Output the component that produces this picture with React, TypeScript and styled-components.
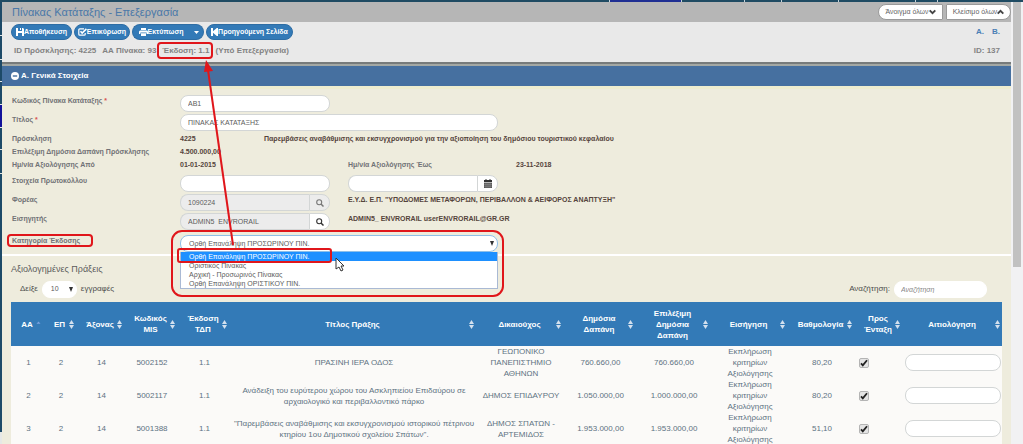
import React from 'react';
import styled, { createGlobalStyle, css } from 'styled-components';

const GlobalStyle = createGlobalStyle`
  * { box-sizing: border-box; }
  body {
    margin: 0;
    background: #eeecdd;
    color: #5f6a74;
    font-family: "Liberation Sans", Arial, sans-serif;
    font-size: 8px;
    line-height: 12px;
  }
  button, input, select { font-family: inherit; font-size: 7px; line-height: 12px; margin: 0; }
  svg { display: block; flex: none; }
`;

const red = '#e0161b';

const Frame = styled.div`
  position: relative;
  display: flex;
  flex-direction: column;
  height: 100vh;
  overflow: hidden;
`;

const MenuStrip = styled.nav`
  display: flex;
  flex: none;
  height: 2px;
  gap: 1px;
  background: #c5d3da;
`;

const MenuSlot = styled.span<{ $width?: number; $active?: boolean }>`
  ${(p) => (p.$width ? `flex: 0 0 ${p.$width}px;` : 'flex: 1;')}
  background: ${(p) => (p.$active ? '#1f2f93' : '#1f4b63')};
`;

const Body = styled.div`
  display: flex;
  flex: 1;
  min-height: 0;
`;

const Rail = styled.div`
  display: flex;
  flex-direction: column;
  flex: none;
  width: 2px;
  gap: 1px;
  padding-bottom: 12px;
  background: #e6e8e6;
`;

const RailSlot = styled.span<{ $height?: number; $active?: boolean }>`
  ${(p) => (p.$height ? `flex: 0 0 ${p.$height}px;` : 'flex: 1;')}
  background: ${(p) => (p.$active ? '#12129a' : '#1d4a68')};
`;

const Page = styled.main`
  flex: 1;
  min-width: 0;
`;

const ScrollTrack = styled.div`
  flex: none;
  width: 12px;
  padding: 0 2px;
  background: #f1f1f3;
`;

const ScrollThumb = styled.div`
  height: 60%;
  background: #c1c1c1;
`;

const TitleBar = styled.header`
  display: flex;
  align-items: center;
  justify-content: space-between;
  height: 20px;
  padding-left: 10px;
  background: #b6b6b6;
`;

const PageTitle = styled.h1`
  margin: 0;
  font-size: 11px;
  line-height: 16px;
  font-weight: normal;
  color: #4a78a8;
`;

const ButtonPair = styled.div`
  display: flex;
  gap: 3px;
`;

const FoldButton = styled.button<{ $side: 'left' | 'right' }>`
  display: flex;
  align-items: center;
  justify-content: center;
  width: 65px;
  height: 16px;
  padding: 0;
  border: 1px solid #9a9a9a;
  border-radius: ${(p) => (p.$side === 'left' ? '8px 1px 1px 8px' : '1px 8px 8px 1px')};
  background: #fff;
  color: #5f5f5f;
`;

const Toolbar = styled.section`
  display: flex;
  justify-content: space-between;
  height: 40px;
  padding: 2px 11px 0 9px;
  background: #e9e9e9;
`;

const Stack = styled.div<{ $end?: boolean }>`
  display: flex;
  flex-direction: column;
  gap: 5px;
  ${(p) => p.$end && 'align-items: flex-end;'}
`;

const ButtonRow = styled.div`
  display: flex;
  align-items: center;
  height: 16px;
  gap: 2px;
`;

const ActionButton = styled.button<{ $width: number; $part?: 'start' | 'end' }>`
  display: flex;
  align-items: center;
  justify-content: center;
  width: ${(p) => p.$width}px;
  height: 16px;
  padding: 0;
  border: 1px solid #2e6da4;
  border-radius: ${(p) => (p.$part === 'start' ? '8px 0 0 8px' : p.$part === 'end' ? '0 8px 8px 0' : '8px')};
  ${(p) => p.$part === 'start' && 'border-right: 0;'}
  ${(p) => p.$part === 'end' && 'border-left: 0;'}
  background: #337ab7;
  color: #fff;
  font-weight: bold;
  white-space: nowrap;
`;

const SplitButton = styled.div`
  display: flex;
`;

const InfoRow = styled.div`
  display: flex;
  gap: 6px;
  padding-left: 3px;
  font-weight: bold;
  color: #838383;
`;

const JumpLinks = styled.nav`
  display: flex;
  align-items: center;
  height: 16px;
  gap: 8px;
`;

const JumpLink = styled.a`
  font-weight: bold;
  font-size: 8px;
  color: #4a7fb5;
  text-decoration: none;
`;

const SectionHeader = styled.h2`
  display: flex;
  align-items: center;
  gap: 2px;
  height: 24px;
  margin: 0;
  padding: 2px 0 0 9px;
  border-top: 2px solid #777b7b;
  background: #4670a0;
  box-shadow: inset 0 2px 0 #a3a8a4;
  font-size: 8px;
  line-height: 12px;
  color: #fff;
`;

const Form = styled.form`
  padding: 6px 0 0 10px;
  border-top: 3px solid #eeedcf;
  border-bottom: 2px solid #fff;
`;

const FormRow = styled.div<{ $height: number }>`
  display: grid;
  grid-template-columns: 168px 84px 84px 168px 1fr;
  align-items: start;
  height: ${(p) => p.$height}px;
`;

const Label = styled.label`
  font-size: 7px;
  font-weight: bold;
  white-space: nowrap;
  color: #717276;
`;

const Required = styled.span`
  color: #d9534f;
`;

const Value = styled.output<{ $from?: number }>`
  ${(p) => p.$from && `grid-column: ${p.$from} / -1;`}
  font-size: 7px;
  font-weight: bold;
  white-space: nowrap;
  color: #55443c;
`;

const field = css`
  height: 17px;
  border: 1px solid #d3d6d6;
  border-radius: 8px;
  background: #fff;
  color: #5c5c5c;
  outline: none;
`;

const TextField = styled.input<{ $wide?: boolean }>`
  ${field}
  width: ${(p) => (p.$wide ? 318 : 150)}px;
  padding: 0 7px;
`;

const Group = styled.div`
  display: flex;
  width: 150px;
`;

const GroupInput = styled.input`
  ${field}
  flex: 1;
  min-width: 0;
  padding: 0 7px;
  border-right: 0;
  border-radius: 8px 0 0 8px;
  &:read-only { background: #ececec; }
`;

const GroupButton = styled.button<{ $muted?: boolean }>`
  ${field}
  display: flex;
  align-items: center;
  justify-content: center;
  width: 21px;
  padding: 0;
  border-radius: 0 8px 8px 0;
  background: ${(p) => (p.$muted ? '#ececec' : '#fff')};
  color: ${(p) => (p.$muted ? '#777' : '#333')};
`;

const SelectBox = styled.div<{ $width: number }>`
  position: relative;
  width: ${(p) => p.$width}px;
`;

const Select = styled.select<{ $focus?: boolean }>`
  ${field}
  display: block;
  appearance: none;
  width: 100%;
  padding: 0 8px;
  border-color: ${(p) => (p.$focus ? '#8fbfe8' : '#fff')};
`;

const SelectArrow = styled.svg`
  position: absolute;
  top: 6px;
  right: 4px;
  pointer-events: none;
`;

const OptionList = styled.ul`
  position: absolute;
  top: 100%;
  left: 0;
  right: 0;
  z-index: 2;
  margin: 0;
  padding: 0;
  border: 1px solid #a9b9d4;
  border-top: 0;
  background: #fff;
  list-style: none;
`;

const Option = styled.li<{ $active?: boolean }>`
  padding-left: 8px;
  font-size: 7px;
  line-height: 9px;
  height: 9px;
  color: ${(p) => (p.$active ? '#fff' : '#5c5c5c')};
  background: ${(p) => (p.$active ? '#1e90ff' : 'transparent')};
`;

const Results = styled.section`
  padding: 6px 9px 0 9px;
`;

const ResultsTitle = styled.h2`
  margin: 0;
  font-size: 9px;
  line-height: 14px;
  font-weight: normal;
  color: #5c5c5c;
`;

const ListControls = styled.div`
  display: flex;
  justify-content: space-between;
  align-items: center;
  height: 26px;
  padding: 0 15px 0 9px;
`;

const ControlLabel = styled.label`
  display: flex;
  align-items: center;
  gap: 4px;
  color: #4c4c4c;
`;

const SearchField = styled.input`
  ${field}
  width: 93px;
  padding: 0 6px;
  border-color: #fff;
  &::placeholder { color: #8a8a8a; font-style: italic; }
`;

const Table = styled.table`
  width: 100%;
  table-layout: fixed;
  border-collapse: collapse;
  background: #fbfaf8;
  line-height: 11px;
  text-align: center;
`;

const Col = styled.col<{ $width?: number }>`
  ${(p) => p.$width && `width: ${p.$width}px;`}
`;

const HeadCell = styled.th`
  height: 44px;
  padding: 0;
  background: #337ab7;
  color: #fff;
`;

const HeadContent = styled.div`
  display: flex;
  align-items: center;
  padding: 0 2px 0 7px;
`;

const HeadText = styled.span`
  flex: 1;
  white-space: pre-line;
`;

const Cell = styled.td<{ $left?: boolean }>`
  height: 33px;
  padding: 0 0 0 3px;
  color: #5d7282;
  white-space: pre-line;
  ${(p) => p.$left && 'text-align: left; padding-left: 5px;'}
`;

const CheckBox = styled.label`
  position: relative;
  display: block;
  width: 10px;
`;

const Check = styled.input`
  appearance: none;
  display: block;
  width: 10px;
  height: 10px;
  border: 1px solid #b4b4b4;
  border-radius: 2px;
  background: #e4e4e4;
`;

const CheckMark = styled.svg`
  position: absolute;
  top: 1px;
  left: 1px;
  pointer-events: none;
  opacity: 0;
  ${Check}:checked + & { opacity: 1; }
`;

const NoteField = styled.input`
  ${field}
  display: block;
  width: 96px;
  padding: 0 7px;
`;

const Annotation = styled.svg`
  position: absolute;
  top: 0;
  left: 0;
  z-index: 5;
  pointer-events: none;
`;

const SaveIcon = () => (
  <svg width="8" height="8" viewBox="0 0 8 8" fill="#fff">
    <path d="M0 0h2v3h4V0h1l1 1v7H6V5H2v3H0zM4 0h1v2H4z" />
  </svg>
);
const CheckIcon = () => (
  <svg width="9" height="8" viewBox="0 0 9 8" fill="none" stroke="#fff">
    <path d="M6 .8H1.8Q.8.8.8 1.8v4.4q0 1 1 1h4.4q1 0 1-1V5" strokeWidth="1.2" />
    <path d="M2.5 3.2l1.7 1.9L8.4.9" strokeWidth="1.6" />
  </svg>
);
const PrintIcon = () => (
  <svg width="9" height="8" viewBox="0 0 9 8" fill="#fff">
    <path d="M2 0h5v2H2zM1 2.4h7l1 1V6H7.6V4.6H1.4V6H0V3.4zM2 5.2h5V8H2z" />
  </svg>
);
const BackIcon = () => (
  <svg width="7" height="8" viewBox="0 0 7 8" fill="#fff">
    <path d="M0 0h2v3.2L5.8 0H7v8H5.8L2 4.8V8H0z" />
  </svg>
);
const CaretIcon = () => (
  <svg width="5" height="3" viewBox="0 0 5 3" fill="#fff"><path d="M0 0h5L2.5 3z" /></svg>
);
const Chevron = ({ up }: { up?: boolean }) => (
  <svg width="7" height="6" viewBox="0 0 7 6" fill="none" stroke="#444" strokeWidth="1.9">
    <path d={up ? 'M.7 4.6L3.5 1.8l2.8 2.8' : 'M.7 1.3l2.8 2.8 2.8-2.8'} />
  </svg>
);
const MinusIcon = () => (
  <svg width="8" height="8" viewBox="0 0 8 8"><circle cx="4" cy="4" r="4" fill="#fff" /><path d="M1.8 4h4.4" stroke="#4670a0" strokeWidth="1.4" /></svg>
);
const SearchIcon = () => (
  <svg width="8" height="8" viewBox="0 0 8 8" fill="none" stroke="currentColor">
    <circle cx="3.2" cy="3.2" r="2.5" strokeWidth="1.1" /><path d="M5 5l2.5 2.5" strokeWidth="1.5" />
  </svg>
);
const CalendarIcon = () => (
  <svg width="8" height="9" viewBox="0 0 8 9" fill="#333">
    <path d="M0 1h1.5V0h1v1h3V0h1v1H8v2H0z" />
    <path d="M0 3.6h8V9H0z" fill="#555" />
    <path d="M0 5.4h8M0 7.2h8M2 3.6V9M4 3.6V9M6 3.6V9" stroke="#aaa" strokeWidth=".4" />
  </svg>
);
const SortIcon = ({ single }: { single?: boolean }) =>
  single ? (
    <svg width="5" height="9" viewBox="0 0 5 9"><path d="M.5 3.8L2.5 1.6l2 2.2z" fill="#7da3e0" /></svg>
  ) : (
    <svg width="5" height="9" viewBox="0 0 5 9" fill="#d3e0ee"><path d="M0 4l2.5-4L5 4zM0 5h5L2.5 9z" /></svg>
  );

const Arrow = () => (
  <SelectArrow width="4" height="5" viewBox="0 0 4 5" fill="#333"><path d="M0 0h4L2 5z" /></SelectArrow>
);

const columns: { title: string; width?: number }[] = [
  { title: 'ΑΑ', width: 32 },
  { title: 'ΕΠ', width: 33 },
  { title: 'Άξονας', width: 48 },
  { title: 'Κωδικός\nMIS', width: 53 },
  { title: 'Έκδοση\nΤΔΠ', width: 52 },
  { title: 'Τίτλος Πράξης' },
  { title: 'Δικαιούχος', width: 87 },
  { title: 'Δημόσια\nΔαπάνη', width: 72 },
  { title: 'Επιλέξιμη\nΔημόσια\nΔαπάνη', width: 75 },
  { title: 'Εισήγηση', width: 77 },
  { title: 'Βαθμολογία', width: 67 },
  { title: 'Προς\nΈνταξη', width: 48 },
  { title: 'Αιτιολόγηση', width: 100 },
];

const verdict = 'Εκπλήρωση\nκριτηρίων\nΑξιολόγησης';

const rows = [
  ['1', '2', '14', '5002152', '1.1', 'ΠΡΑΣΙΝΗ ΙΕΡΑ ΟΔΟΣ', 'ΓΕΩΠΟΝΙΚΟ\nΠΑΝΕΠΙΣΤΗΜΙΟ\nΑΘΗΝΩΝ', '760.660,00', '760.660,00', verdict, '80,20'],
  ['2', '2', '14', '5002117', '1.1', 'Ανάδειξη του ευρύτερου χώρου του Ασκληπιείου Επιδαύρου σε\nαρχαιολογικό και περιβαλλοντικό πάρκο', 'ΔΗΜΟΣ ΕΠΙΔΑΥΡΟΥ', '1.050.000,00', '1.000.000,00', verdict, '80,20'],
  ['3', '2', '14', '5001388', '1.1', '"Παρεμβάσεις αναβάθμισης και εκσυγχρονισμού ιστορικού πέτρινου\nκτηρίου 1ου Δημοτικού σχολείου Σπάτων".', 'ΔΗΜΟΣ ΣΠΑΤΩΝ -\nΑΡΤΕΜΙΔΟΣ', '1.953.000,00', '1.953.000,00', verdict, '51,10'],
];

const options = [
  'Ορθή Επανάληψη ΠΡΟΣΩΡΙΝΟΥ ΠΙΝ.',
  'Οριστικός Πίνακας',
  'Αρχική - Προσωρινός Πίνακας',
  'Ορθή Επανάληψη ΟΡΙΣΤΙΚΟΥ ΠΙΝ.',
];

export default function App() {
  return (
    <>
      <GlobalStyle />
      <Frame>
        <MenuStrip>
          <MenuSlot />
          <MenuSlot $width={71} $active />
          <MenuSlot $width={62} />
          <MenuSlot $width={36} />
          <MenuSlot $width={56} />
          <MenuSlot $width={76} />
          <MenuSlot $width={21} />
          <MenuSlot $width={85} />
        </MenuStrip>
        <Body>
          <Rail>
            <RailSlot $height={33} />
            <RailSlot $height={23} />
            <RailSlot $height={21} />
            <RailSlot $height={22} />
            <RailSlot $height={22} $active />
            <RailSlot $height={21} />
            <RailSlot $height={23} />
            <RailSlot />
          </Rail>
          <Page>
            <TitleBar>
              <PageTitle>Πίνακας Κατάταξης - Επεξεργασία</PageTitle>
              <ButtonPair>
                <FoldButton type="button" $side="left">Άνοιγμα όλων<Chevron /></FoldButton>
                <FoldButton type="button" $side="right">Κλείσιμο όλων<Chevron up /></FoldButton>
              </ButtonPair>
            </TitleBar>
            <Toolbar>
              <Stack>
                <ButtonRow>
                  <ActionButton type="button" $width={61}><SaveIcon />Αποθήκευση</ActionButton>
                  <ActionButton type="button" $width={56}><CheckIcon />Επικύρωση</ActionButton>
                  <SplitButton>
                    <ActionButton type="button" $width={57} $part="start"><PrintIcon />Εκτύπωση</ActionButton>
                    <ActionButton type="button" $width={15} $part="end" aria-label="Επιλογές εκτύπωσης"><CaretIcon /></ActionButton>
                  </SplitButton>
                  <ActionButton type="button" $width={87}><BackIcon />Προηγούμενη Σελίδα</ActionButton>
                </ButtonRow>
                <InfoRow>
                  <span>ID Πρόσκλησης: 4225</span>
                  <span>ΑΑ Πίνακα: 93</span>
                  <span>Έκδοση: 1.1</span>
                  <span>(Υπό Επεξεργασία)</span>
                </InfoRow>
              </Stack>
              <Stack $end>
                <JumpLinks>
                  <JumpLink href="#a">Α.</JumpLink>
                  <JumpLink href="#b">Β.</JumpLink>
                </JumpLinks>
                <InfoRow>ID: 137</InfoRow>
              </Stack>
            </Toolbar>
            <SectionHeader id="a"><MinusIcon />Α. Γενικά Στοιχεία</SectionHeader>
            <Form>
              <FormRow $height={19}>
                <Label htmlFor="code">Κωδικός Πίνακα Κατάταξης <Required>*</Required></Label>
                <TextField id="code" defaultValue="ΑΒ1" />
              </FormRow>
              <FormRow $height={19}>
                <Label htmlFor="title">Τίτλος <Required>*</Required></Label>
                <TextField id="title" $wide defaultValue="ΠΙΝΑΚΑΣ ΚΑΤΑΤΑΞΗΣ" />
              </FormRow>
              <FormRow $height={13}>
                <Label htmlFor="call">Πρόσκληση</Label>
                <Value id="call">4225</Value>
                <Value $from={3}>Παρεμβάσεις αναβάθμισης και εκσυγχρονισμού για την αξιοποίηση του δημόσιου τουριστικού κεφαλαίου</Value>
              </FormRow>
              <FormRow $height={13}>
                <Label htmlFor="budget">Επιλέξιμη Δημόσια Δαπάνη Πρόσκλησης</Label>
                <Value id="budget">4.500.000,00</Value>
              </FormRow>
              <FormRow $height={16}>
                <Label htmlFor="from">Ημ/νία Αξιολόγησης Από</Label>
                <Value id="from">01-01-2015</Value>
                <span />
                <Label htmlFor="to">Ημ/νία Αξιολόγησης Έως</Label>
                <Value id="to">23-11-2018</Value>
              </FormRow>
              <FormRow $height={19}>
                <Label htmlFor="protocol">Στοιχεία Πρωτοκόλλου</Label>
                <TextField id="protocol" />
                <span />
                <Group>
                  <GroupInput aria-label="Ημερομηνία" />
                  <GroupButton type="button" aria-label="Ημερολόγιο"><CalendarIcon /></GroupButton>
                </Group>
              </FormRow>
              <FormRow $height={19}>
                <Label htmlFor="body">Φορέας</Label>
                <Group>
                  <GroupInput id="body" readOnly defaultValue="1090224" />
                  <GroupButton type="button" $muted aria-label="Αναζήτηση φορέα"><SearchIcon /></GroupButton>
                </Group>
                <Value $from={4}>Ε.Υ.Δ. Ε.Π. "ΥΠΟΔΟΜΕΣ ΜΕΤΑΦΟΡΩΝ, ΠΕΡΙΒΑΛΛΟΝ &amp; ΑΕΙΦΟΡΟΣ ΑΝΑΠΤΥΞΗ"</Value>
              </FormRow>
              <FormRow $height={22}>
                <Label htmlFor="rapporteur">Εισηγητής</Label>
                <Group>
                  <GroupInput id="rapporteur" readOnly defaultValue="ADMIN5_ENVRORAIL" />
                  <GroupButton type="button" aria-label="Αναζήτηση εισηγητή"><SearchIcon /></GroupButton>
                </Group>
                <Value $from={4}>ADMIN5_ ENVRORAIL userENVRORAIL@GR.GR</Value>
              </FormRow>
              <FormRow $height={19}>
                <Label htmlFor="category">Κατηγορία Έκδοσης</Label>
                <SelectBox $width={318}>
                  <Select id="category" $focus defaultValue={options[0]}>
                    {options.map((o) => <option key={o}>{o}</option>)}
                  </Select>
                  <Arrow />
                  <OptionList role="listbox" aria-label="Κατηγορία Έκδοσης">
                    {options.map((o, i) => (
                      <Option key={o} role="option" aria-selected={i === 0} $active={i === 0}>{o}</Option>
                    ))}
                  </OptionList>
                </SelectBox>
              </FormRow>
            </Form>
            <Results id="b">
              <ResultsTitle>Αξιολογημένες Πράξεις</ResultsTitle>
              <ListControls>
                <ControlLabel>
                  Δείξε
                  <SelectBox $width={35}>
                    <Select defaultValue="10"><option>10</option><option>25</option></Select>
                    <Arrow />
                  </SelectBox>
                  εγγραφές
                </ControlLabel>
                <ControlLabel>
                  Αναζήτηση:
                  <SearchField type="search" placeholder="Αναζήτηση" />
                </ControlLabel>
              </ListControls>
              <Table>
                <colgroup>
                  {columns.map((c) => <Col key={c.title} $width={c.width} />)}
                </colgroup>
                <thead>
                  <tr>
                    {columns.map((c, i) => (
                      <HeadCell key={c.title} scope="col">
                        <HeadContent><HeadText>{c.title}</HeadText><SortIcon single={i === 0} /></HeadContent>
                      </HeadCell>
                    ))}
                  </tr>
                </thead>
                <tbody>
                  {rows.map((row) => (
                    <tr key={row[0]}>
                      {row.map((text, i) => <Cell key={i}>{text}</Cell>)}
                      <Cell $left>
                        <CheckBox>
                          <Check type="checkbox" defaultChecked aria-label="Προς ένταξη" />
                          <CheckMark width="8" height="8" viewBox="0 0 8 8" fill="none" stroke="#222" strokeWidth="1.8"><path d="M1 4.4l1.8 2L7 1.2" /></CheckMark>
                        </CheckBox>
                      </Cell>
                      <Cell><NoteField aria-label="Αιτιολόγηση" /></Cell>
                    </tr>
                  ))}
                </tbody>
              </Table>
            </Results>
          </Page>
          <ScrollTrack><ScrollThumb /></ScrollTrack>
        </Body>
        <Annotation width="520" height="300" viewBox="0 0 520 300" fill="none" stroke={red} strokeWidth="2">
          <rect x="158" y="43" width="54" height="15" rx="3" />
          <rect x="8" y="235" width="84" height="11" rx="3" />
          <rect x="172" y="231" width="331" height="65" rx="10" />
          <rect x="178" y="249" width="153" height="13" rx="2" />
          <path d="M233 245L208 70" />
          <path d="M206 60l-2 12 9-1z" fill={red} stroke="none" />
          <path d="M336 258v11l3-2 2 4 2-1-2-4h3z" fill="#fff" stroke="#333" strokeWidth="1" />
        </Annotation>
      </Frame>
    </>
  );
}
